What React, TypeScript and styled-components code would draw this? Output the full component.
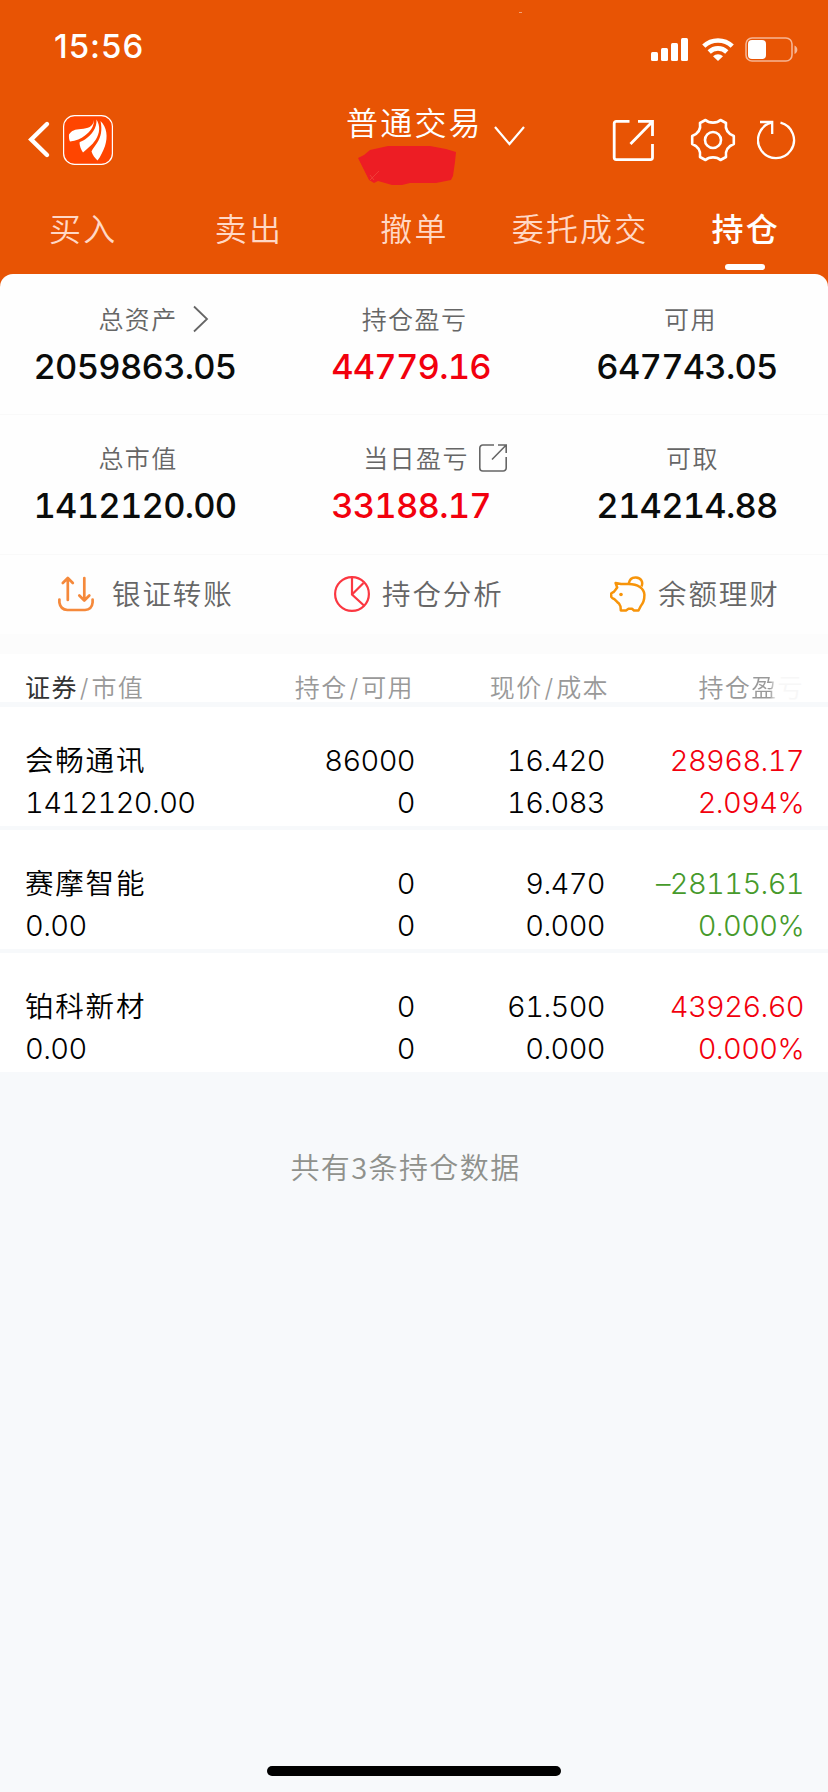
import React from "react";
import styled, { createGlobalStyle } from "styled-components";

const GlobalStyle = createGlobalStyle`
  * { box-sizing: border-box; }
  body {
    margin: 0;
    background: #f7f9fb;
    font-family: Inter, "Noto Sans CJK SC", sans-serif;
    -webkit-font-smoothing: antialiased;
  }
  svg { display: block; flex: none; }
`;

const Page = styled.div`
  width: 828px;
  height: 1792px;
  display: flex;
  flex-direction: column;
  overflow: hidden;
  background: #f7f9fb;
`;

const Header = styled.header`
  height: 288px;
  flex: none;
  background: #e85404;
  color: #fff;
`;

const StatusBar = styled.div`
  height: 92px;
  display: flex;
  align-items: flex-start;
  justify-content: space-between;
  padding: 26px 30px 0 54px;
`;

const Clock = styled.div`
  width: 100px;
  font-size: 33px;
  line-height: 41px;
  font-weight: 450;
  letter-spacing: 1px;
`;

const Speck = styled.i`
  width: 3px;
  height: 1px;
  margin: -14px 0 0 236px;
  background: rgba(255, 255, 255, 0.45);
`;

const StatusIcons = styled.div`
  display: flex;
  align-items: center;
  padding-top: 11px;
`;

const NavBar = styled.div`
  height: 94px;
  display: grid;
  grid-template-columns: 346px 240px 1fr;
`;

const NavLeft = styled.div`
  display: flex;
  align-items: flex-start;
  padding: 23px 0 0 28px;
  gap: 12px;
`;

const TitleBlock = styled.div`
  display: flex;
  align-items: flex-start;
`;

const TitleColumn = styled.div`
  display: flex;
  flex-direction: column;
  width: 148px;
`;

const Title = styled.div`
  margin-top: 9px;
  height: 45px;
  font-size: 32px;
  line-height: 46px;
  letter-spacing: 2.2px;
  font-weight: 350;
  white-space: nowrap;
`;

const NavRight = styled.div`
  display: flex;
  align-items: flex-start;
  padding: 26px 0 0 26px;
`;

const Tabs = styled.nav`
  height: 88px;
  display: grid;
  grid-template-columns: repeat(5, 1fr);
`;

const Tab = styled.div<{ $active?: boolean }>`
  display: flex;
  flex-direction: column;
  align-items: center;
  padding-top: 20px;
  font-size: 32px;
  line-height: 48px;
  letter-spacing: 2.2px;
  text-indent: 1px;
  white-space: nowrap;
  font-weight: ${(p) => (p.$active ? 500 : 350)};
  color: ${(p) => (p.$active ? "#fff" : "#ffd8c6")};

  &::after {
    content: "";
    width: 40px;
    height: 6px;
    margin-top: 10px;
    border-radius: 3px;
    background: ${(p) => (p.$active ? "#fff" : "transparent")};
  }
`;

const Panel = styled.section`
  flex: none;
  height: 360px;
  margin-top: -14px;
  border-radius: 13px 13px 0 0;
  background: #fefefe;
`;

const SummaryRow = styled.div<{ $height: number; $top: number }>`
  height: ${(p) => p.$height}px;
  padding-top: ${(p) => p.$top}px;
  display: grid;
  grid-template-columns: repeat(3, 276px);
  border-bottom: 1px solid #f9f9f9;
`;

const Metric = styled.div`
  display: flex;
  flex-direction: column;
  align-items: center;
`;

const MetricLabel = styled.div<{ $shift?: number }>`
  display: flex;
  align-items: center;
  position: relative;
  height: 36px;
  margin-left: ${(p) => p.$shift ?? 0}px;
  font-size: 25px;
  line-height: 36px;
  letter-spacing: 1.4px;
  font-weight: 350;
  color: #666;
  white-space: nowrap;
`;

const LabelIcon = styled.span<{ $gap: number }>`
  position: absolute;
  left: calc(100% + ${(p) => p.$gap}px);
  top: calc(50% - 1px);
  transform: translateY(-50%);
`;

const MetricValue = styled.div<{ $red?: boolean }>`
  height: 42px;
  margin: 8px 6px 0 0;
  font-size: 34.5px;
  line-height: 42px;
  font-weight: 450;
  font-variant-numeric: tabular-nums;
  letter-spacing: -0.75px;
  color: ${(p) => (p.$red ? "#f2000d" : "#0a0c0b")};
`;

const Actions = styled.div`
  height: 79px;
  display: grid;
  grid-template-columns: repeat(3, 276px);
`;

const Action = styled.div<{ $left: number; $gap: number }>`
  display: flex;
  align-items: center;
  padding: 0 0 2px ${(p) => p.$left}px;
  gap: ${(p) => p.$gap}px;
  font-size: 28.5px;
  line-height: 40px;
  letter-spacing: 1.9px;
  font-weight: 350;
  color: #666;
  white-space: nowrap;

  span { margin-top: 2px; }
`;

const Holdings = styled.section`
  flex: none;
  margin-top: 0;
  border-top: 20px solid #fcfcfc;
`;

const columns = "200px 190px 190px 199px";

const HoldingsHead = styled.div`
  height: 48px;
  padding: 15px 24px 0 25px;
  display: grid;
  grid-template-columns: ${columns};
  background: #fff;
  font-size: 25px;
  line-height: 38px;
  letter-spacing: 1.4px;
  font-weight: 350;
  color: #999;
  white-space: nowrap;
  text-align: right;

  > :first-child { text-align: left; }
  b { font-weight: 400; color: #333; }
  i { font-style: normal; margin: 0 1.5px 0 2px; }
`;

const Fade = styled.span`
  background: linear-gradient(90deg, #999 70%, #d4d4d4 85%, #f6f6f6 92%);
  background-size: 27px 100%;
  background-repeat: no-repeat;
  background-clip: text;
  -webkit-background-clip: text;
  color: transparent;
`;

const Ghost = styled.span`
  color: #f7f7f7;
`;

const HeadCell = styled.div<{ $shift?: number }>`
  height: 33px;
  margin-right: ${(p) => p.$shift ?? 0}px;
`;

const HoldingRow = styled.div`
  height: 123px;
  padding: 36px 24px 0 25px;
  border-top: 4px solid #f7f9fb;
  display: grid;
  grid-template-columns: ${columns};
  background: #fff;
`;

const FirstRowGap = styled.div`
  height: 1px;
  background: #f7f9fb;
`;

const Cell = styled.div<{ $tone?: "red" | "green"; $align?: "left" }>`
  display: flex;
  flex-direction: column;
  align-items: ${(p) => (p.$align === "left" ? "flex-start" : "flex-end")};
  margin-top: -3px;
  font-size: 29px;
  line-height: 42px;
  font-weight: 350;
  font-variant-numeric: tabular-nums;
  letter-spacing: -0.62px;
  white-space: nowrap;
  color: ${(p) =>
    p.$tone === "red" ? "#f2000d" : p.$tone === "green" ? "#469a2b" : "#000"};

  span { height: 42px; }
`;

const StockName = styled.strong`
  height: 42px;
  font-size: 28.5px;
  line-height: 41px;
  letter-spacing: 1.8px;
  font-weight: 350;
`;

const Footnote = styled.div`
  margin-top: 73px;
  padding-right: 17px;
  font-family: "Noto Sans CJK SC", sans-serif;
  font-size: 29px;
  line-height: 42px;
  letter-spacing: 1.4px;
  font-weight: 350;
  text-align: center;
  color: #8f918c;
`;

const HomeIndicator = styled.div`
  width: 294px;
  height: 10px;
  margin: auto auto 16px 267px;
  flex: none;
  border-radius: 5px;
  background: #000;
`;

const SignalIcon = () => (
  <svg width="37" height="23" viewBox="0 0 37 23" fill="#fff">
    <rect x="0" y="14" width="7" height="9" rx="1.5" />
    <rect x="10" y="10" width="7" height="13" rx="1.5" />
    <rect x="20" y="5" width="7" height="18" rx="1.5" />
    <rect x="30" y="0" width="7" height="23" rx="1.5" />
  </svg>
);

const WifiIcon = () => (
  <svg width="32" height="23" viewBox="0 0 32 23" style={{ marginLeft: 14 }}>
    <g fill="none" stroke="#fff" strokeWidth="4.6">
      <path d="M1.8 8.2a20.4 20.4 0 0 1 28.4 0" />
      <path d="M7.2 14a12.6 12.6 0 0 1 17.6 0" />
    </g>
    <path d="M11 18.2a7.3 7.3 0 0 1 10 0L16 23z" fill="#fff" />
  </svg>
);

const BatteryIcon = () => (
  <svg width="53" height="25" viewBox="0 0 53 25" style={{ marginLeft: 11 }}>
    <rect x="1" y="1" width="46" height="23" rx="6" fill="none" stroke="#f6b594" strokeWidth="1.6" />
    <rect x="3" y="3" width="18" height="19" rx="4" fill="#fff" />
    <path d="M49.5 8.5c3.8 1.8 3.8 6.6 0 8.4z" fill="#f6b594" />
  </svg>
);

const BackIcon = () => (
  <svg width="23" height="50" viewBox="0 0 23 50" fill="none" stroke="#fff" strokeWidth="4.4" strokeLinecap="round">
    <path d="M19 9 3.2 24.5 19 40" />
  </svg>
);

const BrandLogo = () => (
  <svg width="50" height="50" viewBox="0 0 50 50">
    <rect x="0.6" y="0.6" width="48.8" height="48.8" rx="11" fill="#ff4500" stroke="#fff" strokeWidth="1.2" />
    <g fill="#fff">
      <path d="M31 5C30 12 25 13.5 18 14C12 14.4 8.5 15.5 6 19.5C5.8 22 6 24.5 7 26.5C13 25.5 18 24 22 20.5C27 16.5 31 12 31 5Z" />
      <path d="M33.5 4.5C34 13 29 19.5 22 24.5C19.5 26.2 17.5 26.5 16.5 27.5C16.5 31 18 34.5 20 37.5C24 33.5 29 30.5 32.5 25C37 18 37.5 11 33.5 4.5Z" />
      <path d="M37.5 6C39.5 15 38 22 34 28C32 31 29.5 34 28.5 36.5C29.5 40 32 43 34.5 45.5C37.5 42 40 36 42 31C45 22 44 12 37.5 6Z" />
    </g>
  </svg>
);

const ChevronDown = () => (
  <svg width="32" height="24" viewBox="0 0 32 24" fill="none" stroke="#fff" strokeWidth="2.2" style={{ marginTop: 32 }}>
    <path d="M1 3 15.5 20 30 3" />
  </svg>
);

const Scribble = () => (
  <svg width="99" height="39" viewBox="0 0 99 39" style={{ marginLeft: 12 }}>
    <path
      d="M0 12 6 9 12 4 30 0H72L88 3 98 6 97 16 95 30 93 34 78 37 52 37 44 39H34L20 35 16 37 11 34 6 24Z"
      fill="#ed1d24"
    />
    <path d="M12 34 21 25 M12 29l4 5" stroke="#f04a40" strokeWidth="0.7" fill="none" />
  </svg>
);

const ExpandIcon = () => (
  <svg width="43" height="43" viewBox="0 0 43 43" fill="none" stroke="#fff" strokeWidth="2.8" style={{ marginTop: 1 }}>
    <path d="M17.5 2.4H4.2a2 2 0 0 0-2 2V38.6a2 2 0 0 0 2 2H38.5a2 2 0 0 0 2-2V25" />
    <path d="M26 2.4H40.5V17 M40.5 2.4 18.5 25" />
  </svg>
);

const GearIcon = () => (
  <svg width="46" height="44" viewBox="-23 -22 46 44" fill="none" stroke="#fff" strokeWidth="2.6" strokeLinejoin="round" style={{ marginLeft: 35 }}>
    <path d="M-7.5 -20 C-4 -16.5 4 -16.5 7.5 -20 L13 -17 C12 -11 14.500 -6.500 20.8 -4 V4 C14.500 6.500 12 11 13 17 L7.5 20 C4 16.5 -4 16.5 -7.5 20 L-13 17 C-12 11 -14.500 6.500 -20.8 4 V-4 C-14.500 -6.500 -12 -11 -13 -17 Z" />
    <circle r="8" />
  </svg>
);

const RefreshIcon = () => (
  <svg width="40" height="42" viewBox="0 0 40 42" fill="none" stroke="#fff" strokeWidth="2.3" style={{ marginLeft: 21 }}>
    <path d="M23.5 4.7A18 18 0 1 1 14.5 4.7" />
    <path d="M3 4H15.2V16" />
  </svg>
);

const ChevronRight = () => (
  <svg width="16" height="28" viewBox="0 0 16 28" fill="none" stroke="#666" strokeWidth="1.8">
    <path d="M1 1.5 14 14 1 26.5" />
  </svg>
);

const SmallExpandIcon = () => (
  <svg width="28" height="28" viewBox="0 0 28 28" fill="none" stroke="#666" strokeWidth="1.6">
    <path d="M15 1H3.8a3 3 0 0 0-3 3V24a3 3 0 0 0 3 3H24.2a3 3 0 0 0 3-3V13" />
    <path d="M19 1H27.2V9 M27.2 1 13 15.5" />
  </svg>
);

const TransferIcon = () => (
  <svg width="36" height="36" viewBox="0 0 36 36" fill="none" stroke="#f5893b" strokeWidth="2.7" strokeLinecap="round" strokeLinejoin="round">
    <path d="M9.8 24V2.5 M4.8 7 9.8 2 14.8 7" />
    <path d="M26.3 2V24 M21.3 19.5 26.3 24.5 31.3 19.5" />
    <path d="M1.4 23.5V26.5q1 7 8 7.5H27q7-.5 7.6-7.5V23.5" />
  </svg>
);

const PieIcon = () => (
  <svg width="36" height="36" viewBox="0 0 36 36" fill="none" stroke="#fb3741" strokeWidth="2.2">
    <circle cx="18" cy="18" r="16.9" />
    <path d="M18 1V18.5L30.5 30 M18.5 18 29.5 7" />
  </svg>
);

const PiggyIcon = () => (
  <svg width="36" height="36" viewBox="0 0 36 36" fill="none" stroke="#f7940a" strokeWidth="2.5" strokeLinejoin="round">
    <path d="M18.5 8C13 8 12 8.2 11 8L5.6 7 7.2 11.5C5.5 13 5 16 2.2 16.8L1.2 17.5V20.8L2.5 22.3C5 22.8 6.5 25.5 9 27.5L10.5 30.5 10.8 34.5H16L18.5 32.8H22L24 34.5H28.5L30.8 30C34 26.5 34.5 23 34.4 18.5C34 12.5 28 8 18.5 8Z" />
    <path d="M18.8 7.5C19.5 3 22.5 1.2 26 1.4C31 1.6 33.5 6 31.5 10.5" />
    <circle cx="11" cy="18.5" r="1.8" fill="#f7940a" stroke="none" />
  </svg>
);

const tabs = ["买入", "卖出", "撤单", "委托成交", "持仓"];

type Holding = {
  name: string;
  marketValue: string;
  held: string;
  available: string;
  price: string;
  cost: string;
  profit: string;
  rate: string;
  tone: "red" | "green";
};

const holdings: Holding[] = [
  { name: "会畅通讯", marketValue: "1412120.00", held: "86000", available: "0", price: "16.420", cost: "16.083", profit: "28968.17", rate: "2.094%", tone: "red" },
  { name: "赛摩智能", marketValue: "0.00", held: "0", available: "0", price: "9.470", cost: "0.000", profit: "–28115.61", rate: "0.000%", tone: "green" },
  { name: "铂科新材", marketValue: "0.00", held: "0", available: "0", price: "61.500", cost: "0.000", profit: "43926.60", rate: "0.000%", tone: "red" },
];

export default function App() {
  return (
    <>
      <GlobalStyle />
      <Page>
        <Header>
          <StatusBar>
            <Clock>15:56</Clock>
            <Speck />
            <StatusIcons>
              <SignalIcon />
              <WifiIcon />
              <BatteryIcon />
            </StatusIcons>
          </StatusBar>
          <NavBar>
            <NavLeft>
              <BackIcon />
              <BrandLogo />
            </NavLeft>
            <TitleBlock>
              <TitleColumn>
                <Title>普通交易</Title>
                <Scribble />
              </TitleColumn>
              <ChevronDown />
            </TitleBlock>
            <NavRight>
              <ExpandIcon />
              <GearIcon />
              <RefreshIcon />
            </NavRight>
          </NavBar>
          <Tabs>
            {tabs.map((t) => (
              <Tab key={t} $active={t === "持仓"}>{t}</Tab>
            ))}
          </Tabs>
        </Header>

        <Panel>
          <SummaryRow $height={141} $top={28}>
            <Metric>
              <MetricLabel>
                总资产
                <LabelIcon $gap={15}><ChevronRight /></LabelIcon>
              </MetricLabel>
              <MetricValue>2059863.05</MetricValue>
            </Metric>
            <Metric>
              <MetricLabel $shift={1}>持仓盈亏</MetricLabel>
              <MetricValue $red>44779.16</MetricValue>
            </Metric>
            <Metric>
              <MetricLabel $shift={1}>可用</MetricLabel>
              <MetricValue>647743.05</MetricValue>
            </Metric>
          </SummaryRow>
          <SummaryRow $height={140} $top={26}>
            <Metric>
              <MetricLabel>总市值</MetricLabel>
              <MetricValue>1412120.00</MetricValue>
            </Metric>
            <Metric>
              <MetricLabel $shift={4}>
                当日盈亏
                <LabelIcon $gap={10}><SmallExpandIcon /></LabelIcon>
              </MetricLabel>
              <MetricValue $red>33188.17</MetricValue>
            </Metric>
            <Metric>
              <MetricLabel $shift={5}>可取</MetricLabel>
              <MetricValue>214214.88</MetricValue>
            </Metric>
          </SummaryRow>
          <Actions>
            <Action $left={58} $gap={18}><TransferIcon /><span>银证转账</span></Action>
            <Action $left={58} $gap={12}><PieIcon /><span>持仓分析</span></Action>
            <Action $left={58} $gap={12}><PiggyIcon /><span>余额理财</span></Action>
          </Actions>
        </Panel>

        <Holdings>
          <HoldingsHead>
            <HeadCell><b>证券</b><i>/</i>市值</HeadCell>
            <HeadCell $shift={1}>持仓<i>/</i>可用</HeadCell>
            <HeadCell $shift={-4}>现价<i>/</i>成本</HeadCell>
            <HeadCell>持仓<Fade>盈</Fade><Ghost>亏</Ghost></HeadCell>
          </HoldingsHead>
          <FirstRowGap />
          {holdings.map((h) => (
            <HoldingRow key={h.name}>
              <Cell $align="left">
                <StockName>{h.name}</StockName>
                <span>{h.marketValue}</span>
              </Cell>
              <Cell><span>{h.held}</span><span>{h.available}</span></Cell>
              <Cell><span>{h.price}</span><span>{h.cost}</span></Cell>
              <Cell $tone={h.tone}><span>{h.profit}</span><span>{h.rate}</span></Cell>
            </HoldingRow>
          ))}
        </Holdings>

        <Footnote>共有3条持仓数据</Footnote>
        <HomeIndicator />
      </Page>
    </>
  );
}
